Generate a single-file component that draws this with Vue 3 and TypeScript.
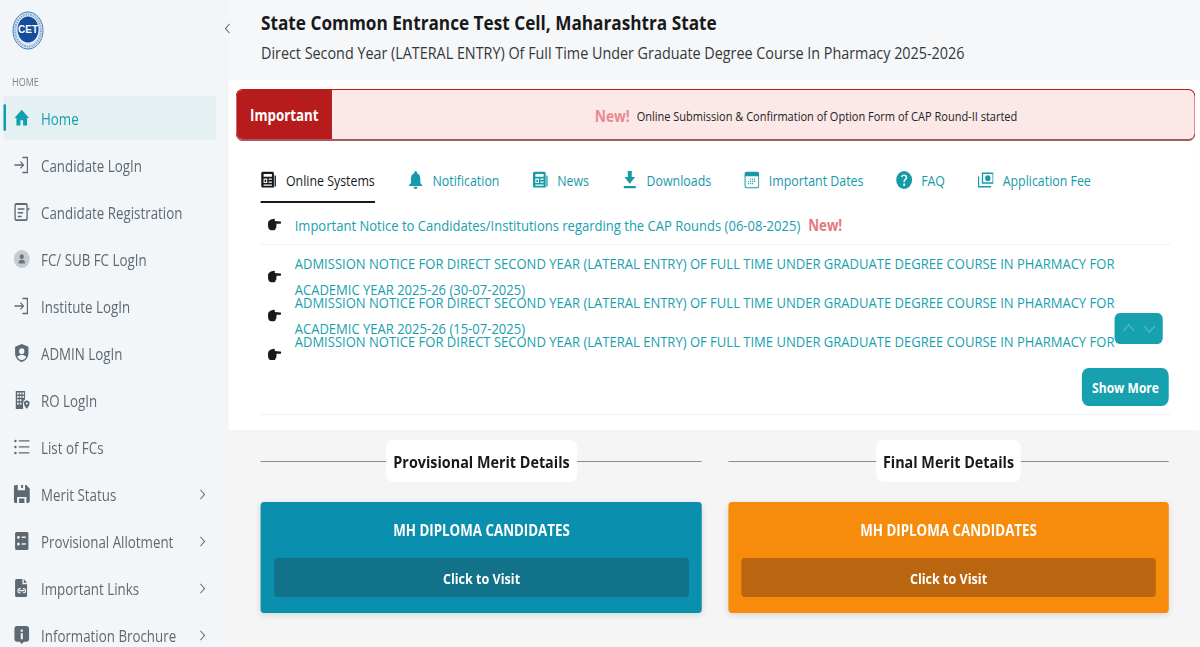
<script setup lang="ts">
interface NavItem { label: string; icon: string; arrow?: boolean; active?: boolean }
const nav: NavItem[] = [
  { label: 'Home', icon: 'home', active: true },
  { label: 'Candidate LogIn', icon: 'login' },
  { label: 'Candidate Registration', icon: 'reg' },
  { label: 'FC/ SUB FC LogIn', icon: 'user' },
  { label: 'Institute LogIn', icon: 'login' },
  { label: 'ADMIN LogIn', icon: 'shield' },
  { label: 'RO LogIn', icon: 'building' },
  { label: 'List of FCs', icon: 'list' },
  { label: 'Merit Status', icon: 'save', arrow: true },
  { label: 'Provisional Allotment', icon: 'doc', arrow: true },
  { label: 'Important Links', icon: 'link', arrow: true },
  { label: 'Information Brochure', icon: 'info', arrow: true }
]
const tabs = [
  { label: 'Online Systems', icon: 'news', active: true },
  { label: 'Notification', icon: 'bell' },
  { label: 'News', icon: 'news' },
  { label: 'Downloads', icon: 'down' },
  { label: 'Important Dates', icon: 'cal' },
  { label: 'FAQ', icon: 'faq' },
  { label: 'Application Fee', icon: 'fee' }
]
const admission = 'ADMISSION NOTICE FOR DIRECT SECOND YEAR (LATERAL ENTRY) OF FULL TIME UNDER GRADUATE DEGREE COURSE IN PHARMACY FOR ACADEMIC YEAR 2025-26'
const notices = [admission + ' (30-07-2025)', admission + ' (15-07-2025)', admission]
const merits = [
  { title: 'Provisional Merit Details', cls: 'blue' },
  { title: 'Final Merit Details', cls: 'orange' }
]
</script>

<template>
  <div class="page">
    <aside class="sidebar">
      <div class="logo">
        <svg width="37.2" height="40" viewBox="0 0 32 40" preserveAspectRatio="none">
          <ellipse cx="16" cy="19.5" rx="15" ry="18.5" fill="#dfe9f4" stroke="#3b78b8" stroke-width="1" />
          <ellipse cx="16" cy="19.5" rx="12.8" ry="16" fill="none" stroke="#7fa6d0" stroke-width="2" stroke-dasharray="1.5 1" />
          <ellipse cx="16" cy="18.5" rx="10.5" ry="13" fill="#134d9c" />
          <text x="16" y="22.5" text-anchor="middle" class="logo-text">CET</text>
        </svg>
      </div>
      <div class="section">HOME</div>
      <nav class="nav">
        <a v-for="item in nav" :key="item.label" class="nav-item" :class="{ active: item.active }">
          <svg class="nav-icon" viewBox="0 0 24 24" fill="currentColor" preserveAspectRatio="none">
            <path v-if="item.icon === 'home'" d="M10 22v-7h4v7h6v-10h3L12 1 1 12h3v10z" />
            <g v-else-if="item.icon === 'login'" fill="none" stroke="currentColor" stroke-width="1.800">
              <path d="M13 2h7.500v20H13" /><path d="M1 12h13" /><path d="M10 7.500l4.500 4.500-4.500 4.500" />
            </g>
            <g v-else-if="item.icon === 'reg'">
              <path fill-rule="evenodd" d="M4 0h14a3 3 0 0 1 3 3v18a3 3 0 0 1-3 3H4a3 3 0 0 1-3-3V3a3 3 0 0 1 3-3zm0 2.500a1 1 0 0 0-1 1v17a1 1 0 0 0 1 1h14a1 1 0 0 0 1-1v-17a1 1 0 0 0-1-1zM6 7h10v2H6zm0 5h8v2H6zm0 5h6v2H6z" />
              <path d="M20 9l3-3 1 1.500-3 3z" />
            </g>
            <g v-else-if="item.icon === 'user'">
              <circle cx="12" cy="12" r="12" fill="#c6cbd0" />
              <circle cx="12" cy="9" r="3.200" fill="#6c7680" /><path d="M7 18c0-4 2-5 5-5s5 1 5 5z" fill="#6c7680" />
            </g>
            <path v-else-if="item.icon === 'shield'" fill-rule="evenodd" d="M12 0l10 3.500V12c0 6-4 10.500-10 12C6 22.500 2 18 2 12V3.500zm0 5.500a4 4 0 1 0 0 8 4 4 0 0 0 0-8zM5 17c2 3 4.500 4 7 4.500 2.500-.5 5-1.500 7-4.500-2-2-4.500-2.500-7-2.500s-5 .5-7 2.500z" />
            <g v-else-if="item.icon === 'building'">
              <path fill-rule="evenodd" d="M3 0h14v11a6 6 0 0 0-3 5v8H3zm2 2v2.500h2.500V2zm4 0v2.500h2.500V2zm4 0v2.500h2.500V2zM5 6.500V9h2.500V6.500zm4 0V9h2.500V6.500zm4 0V9h2.500V6.500zM5 11v2.500h2.500V11zm4 0v2.500h2.500V11zM5 15.500V18h2.500v-2.500zm4 0V18h2.500v-2.500z" />
              <path fill-rule="evenodd" d="M19.500 12.500a4.200 4.200 0 0 1 4.200 4.200c0 2.800-4.200 7-4.200 7s-4.200-4.200-4.200-7a4.200 4.200 0 0 1 4.200-4.200zm0 2.700a1.500 1.500 0 1 0 0 3 1.500 1.500 0 0 0 0-3z" />
            </g>
            <g v-else-if="item.icon === 'list'">
              <circle cx="2.500" cy="4" r="1.800" /><circle cx="2.500" cy="12" r="1.800" /><circle cx="2.500" cy="20" r="1.800" />
              <path d="M7.500 3h16v1.800h-16zM7.500 11h16v1.800h-16zM7.500 19h16v1.800h-16z" />
            </g>
            <path v-else-if="item.icon === 'save'" fill-rule="evenodd" d="M0 3a3 3 0 0 1 3-3h3v7h11V0h2l5 5v16a3 3 0 0 1-3 3h-2v-8H5v8H3a3 3 0 0 1-3-3zM11 0h3v4h-3zM8 18h8v6H8z" />
            <path v-else-if="item.icon === 'doc'" fill-rule="evenodd" d="M4 0h16a2 2 0 0 1 2 2v20a2 2 0 0 1-2 2H4a2 2 0 0 1-2-2V2a2 2 0 0 1 2-2zm3 5a2 2 0 1 0 0 4 2 2 0 0 0 0-4zm5 1v2h6V6zM7 14a2 2 0 1 0 0 4 2 2 0 0 0 0-4zm5 1v2h6v-2z" />
            <path v-else-if="item.icon === 'link'" fill-rule="evenodd" d="M4 0h9v7h7v15a2 2 0 0 1-2 2H4a2 2 0 0 1-2-2V2a2 2 0 0 1 2-2zm11 0l5 5h-5zM9 12a3.500 3.500 0 0 0 0 7h1.500v-1.500H9a2 2 0 0 1 0-4h1.500V12zm4.500 0v1.500H15a2 2 0 0 1 0 4h-1.500V19H15a3.500 3.500 0 0 0 0-7zM8 14.700v1.600h8v-1.600z" />
            <path v-else-if="item.icon === 'info'" fill-rule="evenodd" d="M5 0h14a4 4 0 0 1 4 4v13a4 4 0 0 1-4 4h-4l-3 3-3-3H5a4 4 0 0 1-4-4V4a4 4 0 0 1 4-4zm5.500 4.500v3h3v-3zm0 5v8h3v-8z" />
          </svg>
          <span class="nav-label">{{ item.label }}</span>
          <span v-if="item.arrow" class="chev"></span>
        </a>
      </nav>
    </aside>

    <main class="main">
      <header class="top">
        <span class="collapse"></span>
        <div class="titles">
          <h1>State Common Entrance Test Cell, Maharashtra State</h1>
          <p>Direct Second Year (LATERAL ENTRY) Of Full Time Under Graduate Degree Course In Pharmacy 2025-2026</p>
        </div>
      </header>

      <section class="panel">
        <div class="alert">
          <div class="alert-tag">Important</div>
          <div class="alert-body"><b>New!</b><span>Online Submission &amp; Confirmation of Option Form of CAP Round-II started</span></div>
        </div>

        <div class="tabs">
          <a v-for="tab in tabs" :key="tab.label" class="tab" :class="{ active: tab.active }">
            <svg class="tab-icon" viewBox="0 0 24 24" fill="currentColor" preserveAspectRatio="none">
              <path v-if="tab.icon === 'news'" fill-rule="evenodd" d="M3 1h15a2 2 0 0 1 2 2v18a1 1 0 0 0 1 1H3a2 2 0 0 1-2-2V3a2 2 0 0 1 2-2zm1.500 3v3.500h12.500V4zm0 6v6h5.500v-6zm7.500 0v1.800h5V10zm0 4v1.800h5V14zM4.500 18v1.500h12.500V18zM6 11.500h2.500v3H6zM21 6h1.500a.5.500 0 0 1 .5.500V20a1 1 0 0 1-2 0z" />
              <path v-else-if="tab.icon === 'bell'" d="M12 0a2 2 0 0 1 2 2v1c3.500 1 5 4 5 7.500V16l3 3v1H2v-1l3-3v-5.500C5 7 6.500 4 10 3V2a2 2 0 0 1 2-2zM9 21h6a3 3 0 0 1-6 0z" />
              <path v-else-if="tab.icon === 'down'" d="M9 0h6v8h5l-8 9-8-9h5zM3 20h18v3H3z" />
              <g v-else-if="tab.icon === 'cal'">
                <path fill-rule="evenodd" d="M4 1h16a3 3 0 0 1 3 3v16a3 3 0 0 1-3 3H4a3 3 0 0 1-3-3V4a3 3 0 0 1 3-3zM2.500 7v13c0 .8.7 1.500 1.500 1.500h16c.8 0 1.500-.7 1.500-1.500V7z" />
                <path d="M9 10h1.500v1.500H9zM12 10h1.500v1.500H12zM15 10h1.500v1.500H15zM6 13h1.500v1.500H6zM9 13h1.500v1.500H9zM12 13h1.500v1.500H12zM15 13h1.500v1.500H15zM6 16h1.500v1.500H6zM9 16h1.500v1.500H9zM12 16h1.500v1.500H12z" />
              </g>
              <g v-else-if="tab.icon === 'faq'">
                <circle cx="12" cy="12" r="12" />
                <path d="M11 14.800v-1c0-2.500 3.300-2.600 3.300-5 0-1.300-1-2.100-2.400-2.100-1.300 0-2.300.7-2.900 1.800L7.300 7.300C8.300 5.600 9.900 4.600 12 4.600c2.700 0 4.600 1.600 4.600 4 0 3.200-3.300 3.400-3.300 5.400v.8zm-.3 2h2.800v2.700h-2.800z" fill="#fff" />
              </g>
              <g v-else-if="tab.icon === 'fee'">
                <path fill-rule="evenodd" d="M6 2h18v15H6zm2 2v11h14V4zm7 1.500a4 4 0 1 1 0 8 4 4 0 0 1 0-8z" />
                <path d="M0 7h2v13h18v2H0z" />
              </g>
            </svg>
            <span>{{ tab.label }}</span>
          </a>
        </div>

        <div class="notice-top">
          <svg class="hand" viewBox="0 0 24 18" preserveAspectRatio="none"><path d="M1 7c0-2 2-4 5-5l5-1c1 0 2 1 2 2l-1 1 10 1c2 0 2 3 0 3h-7c1 1 1 2 0 3 1 1 0 3-1 3 0 2-1 3-3 3H7C3 17 1 14 1 11z" /></svg>
          <a>Important Notice to Candidates/Institutions regarding the CAP Rounds (06-08-2025)</a>
          <b>New!</b>
        </div>

        <div class="notice-scroll">
          <div v-for="(n, i) in notices" :key="i" class="notice">
            <svg class="hand" viewBox="0 0 24 18" preserveAspectRatio="none"><path d="M1 7c0-2 2-4 5-5l5-1c1 0 2 1 2 2l-1 1 10 1c2 0 2 3 0 3h-7c1 1 1 2 0 3 1 1 0 3-1 3 0 2-1 3-3 3H7C3 17 1 14 1 11z" /></svg>
            <a>{{ n }}</a>
          </div>
        </div>

        <div class="ticker">
          <span class="tick up"></span>
          <span class="tick down"></span>
        </div>

        <div class="more-row"><button class="more">Show More</button></div>
      </section>

      <section class="merit">
        <div v-for="m in merits" :key="m.title" class="merit-col">
          <div class="merit-head"><h2>{{ m.title }}</h2></div>
          <div class="card" :class="m.cls">
            <h3>MH DIPLOMA CANDIDATES</h3>
            <a class="visit">Click to Visit</a>
          </div>
        </div>
      </section>
    </main>
  </div>
</template>

<style>
html, body { margin: 0; height: 100%; overflow: hidden; background: #f5f5f5; }
</style>

<style scoped>
/* The reference is horizontally compressed, so the page is laid out wider and scaled as a whole. */
.page {
  display: flex;
  width: 1395.35px;
  height: 647px;
  overflow: hidden;
  transform: scaleX(.86);
  transform-origin: 0 0;
  font-family: "Open Sans", "Noto Sans", sans-serif;
}
.sidebar { width: 266.3px; flex: none; background: #f3f6f9; display: flex; flex-direction: column; }
.logo { height: 58px; padding: 11px 0 0 14px; box-sizing: border-box; }
.logo-text { font: 800 10px "Liberation Sans", sans-serif; fill: #fff; }
.section { margin: 19px 0 0 14px; font-size: 10.5px; font-weight: 500; line-height: 14px; color: #7a838b; height: 16px; }
.nav { display: flex; flex-direction: column; margin-top: 7px; padding: 0 15px 0 3.5px; }
.nav-item {
  position: relative;
  display: flex;
  align-items: center;
  height: 44px;
  margin-bottom: 3px;
  padding-left: 12.8px;
  color: #5d6972;
  flex: none;
}
.nav-item.active { background: #e4f0f1; color: #149faf; }
.nav-item.active::before {
  content: "";
  position: absolute;
  left: 0;
  top: 8px;
  width: 3.5px;
  height: 27px;
  border-radius: 2px;
  background: #149faf;
}
.nav-icon { width: 18.6px; height: 18px; flex: none; }
.nav-label { margin: 2px 0 0 12.8px; font-size: 15.5px; white-space: nowrap; }
.chev {
  margin-left: auto;
  margin-right: 14px;
  width: 6px;
  height: 6px;
  border-top: 1px solid #5d6972;
  border-right: 1px solid #5d6972;
  transform: rotate(45deg);
}
.main { flex: 1; min-width: 0; display: flex; flex-direction: column; }
.top { position: relative; height: 80px; background: #f6f7f8; box-sizing: border-box; padding: 9px 0 0 37.2px; }
.collapse {
  position: absolute;
  left: -3.5px;
  top: 25px;
  width: 6px;
  height: 6px;
  border-left: 1px solid #5d6972;
  border-bottom: 1px solid #5d6972;
  transform: rotate(45deg);
}
.titles h1 { margin: 0; font-size: 20px; font-weight: 700; line-height: 28px; color: #17191c; }
.titles p { margin: 3px 0 0; font-size: 16.7px; line-height: 25px; color: #33373b; }
.panel { position: relative; background: #fff; height: 350px; box-sizing: border-box; padding: 9px 5.8px 0 8.1px; }
.alert { display: flex; height: 52px; border: 1px solid #b71c1c; border-bottom: 2px solid #a45a5e; border-radius: 8px; overflow: hidden; background: #fde8e8; box-sizing: border-box; }
.alert-tag { width: 110.5px; flex: none; background: #b71c1c; color: #fff; font-size: 15.5px; font-weight: 700; display: flex; align-items: center; justify-content: center; }
.alert-body { flex: 1; display: flex; align-items: center; justify-content: center; gap: 8px; font-size: 12.8px; color: #202326; padding: 2px 0 0 100px; box-sizing: border-box; }
.alert-body b { color: #e88a92; font-size: 16px; font-weight: 700; }
.tabs { display: flex; gap: 38px; margin: 18px 0 0 29px; }
.tab { display: flex; align-items: center; gap: 10.5px; height: 44px; padding-bottom: 2px; box-sizing: border-box; color: #159aa8; font-size: 14.4px; white-space: nowrap; }
.tab.active { color: #17191c; border-bottom: 2px solid #17191c; padding-bottom: 0; }
.tab-icon { width: 18.6px; height: 18px; flex: none; }
.notice-top { display: flex; align-items: center; height: 42px; box-sizing: border-box; padding: 2px 0 0 8px; margin: 0 29px; border-bottom: 1px solid #f1f2f3; font-size: 15.15px; color: #17a0ae; }
.hand { width: 16.3px; height: 13px; margin-right: 15px; flex: none; fill: #17191c; }
.notice-top b { margin-left: 9.3px; color: #e5777f; font-weight: 700; font-size: 15.5px; }
.notice-scroll { height: 115px; overflow: hidden; margin: 0 29px; padding: 5px 0 0 8px; box-sizing: border-box; }
.notice { display: flex; height: 39px; align-items: flex-start; color: #17a0ae; font-size: 15.15px; line-height: 26px; }
.notice .hand { margin-top: 20px; }
.notice a { flex: 1; min-width: 0; }
.ticker { position: absolute; left: 1030px; top: 233px; width: 55.8px; height: 31px; background: #17a0ae; border-radius: 6px; display: flex; align-items: center; justify-content: center; gap: 15px; }
.tick { width: 8px; height: 8px; border-top: 1px solid #6cc4ce; border-left: 1px solid #6cc4ce; }
.tick.up { transform: rotate(45deg); margin-top: 4px; }
.tick.down { transform: rotate(225deg); margin-top: -4px; }
.more-row { display: flex; justify-content: flex-end; margin: 0 29px; padding-bottom: 8px; border-bottom: 1px solid #f1f2f3; }
.more { height: 38px; width: 101.2px; border: 0; border-radius: 8px; background: #17a0ae; color: #fff; font: 700 14px "Open Sans", sans-serif; padding: 0; margin: 8px 1.2px 0 0; }
.merit { flex: 1; margin-left: 7px; background: #f5f5f5; display: flex; gap: 30.2px; padding: 10px 36px 0 30.2px; }
.merit-col { flex: 1; min-width: 0; }
.merit-head { display: flex; align-items: center; justify-content: center; height: 42px; background: linear-gradient(#8a8d90, #8a8d90) center / 100% 1px no-repeat; }
.merit-head h2 { margin: 0; height: 42px; padding: 0 8.1px; background: #fff; border-radius: 8px; display: flex; align-items: center; font-size: 16.7px; font-weight: 700; color: #17191c; }
.card { margin-top: 20px; height: 111px; padding: 0 15.1px; box-sizing: border-box; border-radius: 4px; color: #fff; text-align: center; box-shadow: 0 2px 7px rgba(0, 0, 0, .12); }
.card h3 { margin: 0; height: 56px; display: flex; align-items: center; justify-content: center; font-size: 15.5px; font-weight: 700; }
.visit { display: flex; align-items: center; justify-content: center; height: 39px; border-radius: 4px; font-size: 14.6px; font-weight: 700; }
.blue { background: #0b8fae; }
.blue .visit { background: #11728a; }
.orange { background: #f78b0c; }
.orange .visit { background: #ba650f; }
</style>
